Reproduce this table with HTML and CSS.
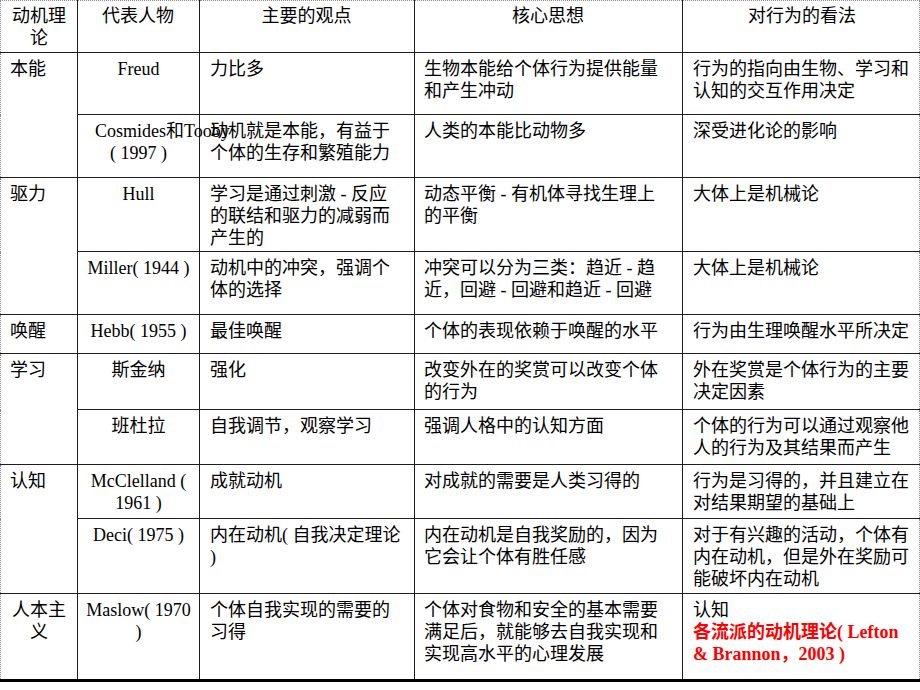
FILE: index.html
```html
<!DOCTYPE html>
<html lang="zh-CN">
<head>
<meta charset="utf-8">
<title>各流派的动机理论</title>
<link rel="stylesheet" href="styles.css">
</head>
<body>
<table class="grid">
  <colgroup>
    <col class="c1"><col class="c2"><col class="c3"><col class="c4"><col class="c5">
  </colgroup>
  <tr class="h-head">
    <th class="cat">动机理论</th>
    <th>代表人物</th>
    <th>主要的观点</th>
    <th>核心思想</th>
    <th class="last">对行为的看法</th>
  </tr>
  <tr class="h62">
    <td class="cat" rowspan="2">本能</td>
    <td class="who">Freud</td>
    <td class="view">力比多</td>
    <td class="core">生物本能给个体行为提供能量和产生冲动</td>
    <td class="last">行为的指向由生物、学习和认知的交互作用决定</td>
  </tr>
  <tr class="h63">
    <td class="who"><div class="overflow-line">Cosmides和Tooby</div>( 1997 )</td>
    <td class="view">动机就是本能，有益于个体的生存和繁殖能力</td>
    <td class="core">人类的本能比动物多</td>
    <td class="last">深受进化论的影响</td>
  </tr>
  <tr class="h74">
    <td class="cat" rowspan="2">驱力</td>
    <td class="who">Hull</td>
    <td class="view">学习是通过刺激 - 反应的联结和驱力的减弱而产生的</td>
    <td class="core">动态平衡 - 有机体寻找生理上的平衡</td>
    <td class="last">大体上是机械论</td>
  </tr>
  <tr class="h63">
    <td class="who">Miller( 1944 )</td>
    <td class="view">动机中的冲突，强调个体的选择</td>
    <td class="core">冲突可以分为三类：趋近 - 趋近，回避 - 回避和趋近 - 回避</td>
    <td class="last">大体上是机械论</td>
  </tr>
  <tr class="h39">
    <td class="cat">唤醒</td>
    <td class="who">Hebb( 1955 )</td>
    <td class="view">最佳唤醒</td>
    <td class="core">个体的表现依赖于唤醒的水平</td>
    <td class="last">行为由生理唤醒水平所决定</td>
  </tr>
  <tr class="h56">
    <td class="cat" rowspan="2">学习</td>
    <td class="who">斯金纳</td>
    <td class="view">强化</td>
    <td class="core">改变外在的奖赏可以改变个体的行为</td>
    <td class="last">外在奖赏是个体行为的主要决定因素</td>
  </tr>
  <tr class="h55">
    <td class="who">班杜拉</td>
    <td class="view">自我调节，观察学习</td>
    <td class="core">强调人格中的认知方面</td>
    <td class="last">个体的行为可以通过观察他人的行为及其结果而产生</td>
  </tr>
  <tr class="h54">
    <td class="cat" rowspan="2">认知</td>
    <td class="who">McClelland ( 1961 )</td>
    <td class="view">成就动机</td>
    <td class="core">对成就的需要是人类习得的</td>
    <td class="last">行为是习得的，并且建立在对结果期望的基础上</td>
  </tr>
  <tr class="h75">
    <td class="who">Deci( 1975 )</td>
    <td class="view">内在动机( 自我决定理论 )</td>
    <td class="core">内在动机是自我奖励的，因为它会让个体有胜任感</td>
    <td class="last">对于有兴趣的活动，个体有内在动机，但是外在奖励可能破坏内在动机</td>
  </tr>
  <tr class="h87 final">
    <td class="cat centered">人本主义</td>
    <td class="who">Maslow( 1970 )</td>
    <td class="view">个体自我实现的需要的习得</td>
    <td class="core">个体对食物和安全的基本需要满足后，就能够去自我实现和实现高水平的心理发展</td>
    <td class="last">认知<br><span class="source">各流派的动机理论( Lefton &amp; Brannon，2003 )</span></td>
  </tr>
</table>
</body>
</html>
```

FILE: styles.css
```css
html, body {
  margin: 0;
  padding: 0;
  background: #ffffff;
}

.grid {
  border-collapse: collapse;
  table-layout: fixed;
  width: 919px;
  font-family: "Liberation Serif", "Noto Sans CJK SC", serif;
  font-size: 18px;
  line-height: 22px;
  color: #000000;
}

.c1 { width: 77px; }
.c2 { width: 122px; }
.c3 { width: 215px; }
.c4 { width: 268px; }
.c5 { width: 237px; }

.grid th,
.grid td {
  border: 1px solid #1e1e1e;
  vertical-align: top;
  text-align: left;
  padding: 5px 10px 0 9px;
  overflow: visible;
}

.grid th {
  font-weight: normal;
  text-align: center;
  padding-top: 4px;
  border-top: 1px dotted #8a8a8a;
}

.grid .cat {
  border-left: 1px dotted #8a8a8a;
  padding-left: 9px;
  padding-right: 9px;
}

.grid .view {
  padding-left: 10px;
  padding-right: 12px;
}

.grid .core {
  padding-left: 9px;
  padding-right: 13px;
}

.grid .last {
  border-right: 1px dotted #8a8a8a;
  padding-left: 10px;
  padding-right: 8px;
}

.grid .centered {
  text-align: center;
}

.grid .who {
  text-align: center;
  padding-left: 6px;
  padding-right: 6px;
}

.overflow-line {
  white-space: nowrap;
  text-align: left;
  padding-left: 11px;
}

.source {
  color: #ff0000;
  font-weight: bold;
}

.h-head { height: 52px; }
.h62 { height: 62px; }
.h63 { height: 63px; }
.h74 { height: 74px; }
.h39 { height: 39px; }
.h56 { height: 56px; }
.h55 { height: 55px; }
.h54 { height: 54px; }
.h75 { height: 75px; }
.h87 { height: 87px; }

.grid .final td {
  border-bottom: 3px solid #000000;
}
```
